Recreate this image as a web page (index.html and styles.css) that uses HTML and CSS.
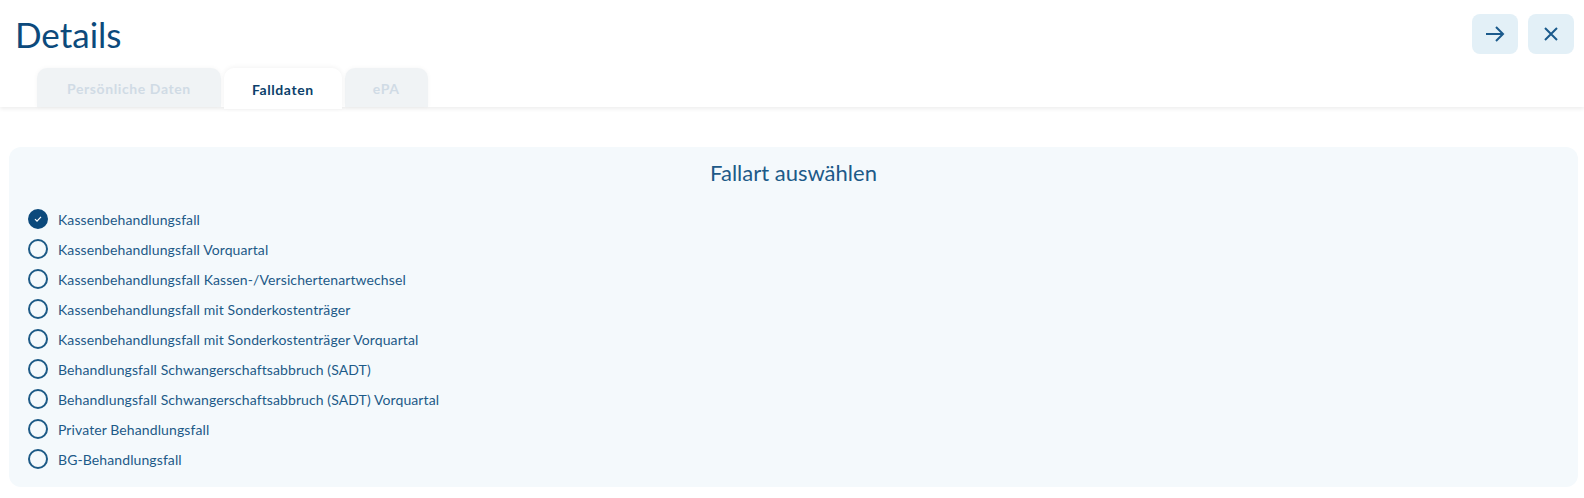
FILE: index.html
```html
<!DOCTYPE html>
<html lang="de">
<head>
  <meta charset="UTF-8">
  <title>Details</title>
  <link rel="stylesheet" href="styles.css">
</head>
<body>
  <div class="header">
    <div class="header-row">
      <h1 class="title">Details</h1>
      <div class="actions">
        <button class="icon-btn" title="Weiter">
          <svg width="20" height="20" viewBox="0 0 20 20" fill="none" stroke="currentColor" stroke-width="2">
            <path d="M1 10h17M11 3l7 7-7 7"/>
          </svg>
        </button>
        <button class="icon-btn" title="Schließen">
          <svg width="20" height="20" viewBox="0 0 20 20" fill="none" stroke="currentColor" stroke-width="2">
            <path d="M4 4l12 12M16 4L4 16"/>
          </svg>
        </button>
      </div>
    </div>
    <div class="tabs">
      <div class="tab">Persönliche Daten</div>
      <div class="tab active">Falldaten</div>
      <div class="tab">ePA</div>
    </div>
  </div>

  <div class="content">
    <div class="panel">
      <h2 class="panel-title">Fallart auswählen</h2>
      <ul class="options">
        <li class="option checked"><span class="radio">
          <svg width="10" height="10" viewBox="0 0 10 10" fill="none" stroke="#fff" stroke-width="1.2"><path d="M2 5.2l2 2 4-4.4"/></svg>
        </span>Kassenbehandlungsfall</li>
        <li class="option"><span class="radio"></span>Kassenbehandlungsfall Vorquartal</li>
        <li class="option"><span class="radio"></span>Kassenbehandlungsfall Kassen-/Versichertenartwechsel</li>
        <li class="option"><span class="radio"></span>Kassenbehandlungsfall mit Sonderkostenträger</li>
        <li class="option"><span class="radio"></span>Kassenbehandlungsfall mit Sonderkostenträger Vorquartal</li>
        <li class="option"><span class="radio"></span>Behandlungsfall Schwangerschaftsabbruch (SADT)</li>
        <li class="option"><span class="radio"></span>Behandlungsfall Schwangerschaftsabbruch (SADT) Vorquartal</li>
        <li class="option"><span class="radio"></span>Privater Behandlungsfall</li>
        <li class="option"><span class="radio"></span>BG-Behandlungsfall</li>
      </ul>
    </div>
  </div>
</body>
</html>
```

FILE: styles.css
```css
* {
  margin: 0;
  padding: 0;
  box-sizing: border-box;
}

body {
  font-family: Lato, "Open Sans", sans-serif;
  background-color: #ffffff;
  color: #1d5a88;
  overflow: hidden;
}

.header {
  position: relative;
  padding: 14px 10px 0 15px;
  background-color: #fff;
  box-shadow: 0 2px 4px rgba(0, 0, 0, 0.07);
}

.header-row {
  display: flex;
  justify-content: space-between;
  align-items: flex-start;
}

.title {
  font-size: 35px;
  font-weight: 400;
  line-height: 40px;
  color: #0c4a7c;
}

.actions {
  display: flex;
  gap: 10px;
}

.icon-btn {
  width: 46px;
  height: 40px;
  border: none;
  border-radius: 8px;
  background-color: #e3f0f7;
  color: #1b5a8c;
  display: flex;
  align-items: center;
  justify-content: center;
  cursor: pointer;
}

.tabs {
  display: flex;
  gap: 3px;
  margin: 14px 0 0 22px;
  height: 39px;
}

.tab {
  display: flex;
  align-items: center;
  padding: 2px 28px 0;
  font-size: 14px;
  font-weight: 700;
  letter-spacing: 0.6px;
  color: #d0dbe5;
  background-color: #f0f3f5;
  border-radius: 10px 10px 0 0;
  box-shadow: 0 0 5px rgba(0, 0, 0, 0.04);
}

.tab:first-child {
  padding: 2px 30px 0;
}

.tab.active {
  background-color: #fff;
  color: #0c3f6b;
  position: relative;
  z-index: 1;
  height: 41px;
  box-shadow: 0 -1px 5px rgba(0, 0, 0, 0.05);
}

.content {
  padding: 40px 6px 11px 9px;
}

.panel {
  background-color: #f4f9fc;
  border-radius: 12px;
  height: 340px;
  padding: 12px 19px;
}

.panel-title {
  text-align: center;
  font-size: 22px;
  font-weight: 400;
  line-height: 28px;
  color: #1d5a88;
  margin-bottom: 17px;
}

.options {
  list-style: none;
}

.option {
  display: flex;
  align-items: center;
  gap: 10px;
  height: 30px;
  font-size: 14px;
  letter-spacing: 0.1px;
  color: #1d5a88;
}

.radio {
  width: 20px;
  height: 20px;
  border: 2px solid #1d5a86;
  border-radius: 50%;
  display: flex;
  align-items: center;
  justify-content: center;
  flex-shrink: 0;
}

.option.checked .radio {
  background-color: #0c4a7c;
  border-color: #0c4a7c;
}
```
